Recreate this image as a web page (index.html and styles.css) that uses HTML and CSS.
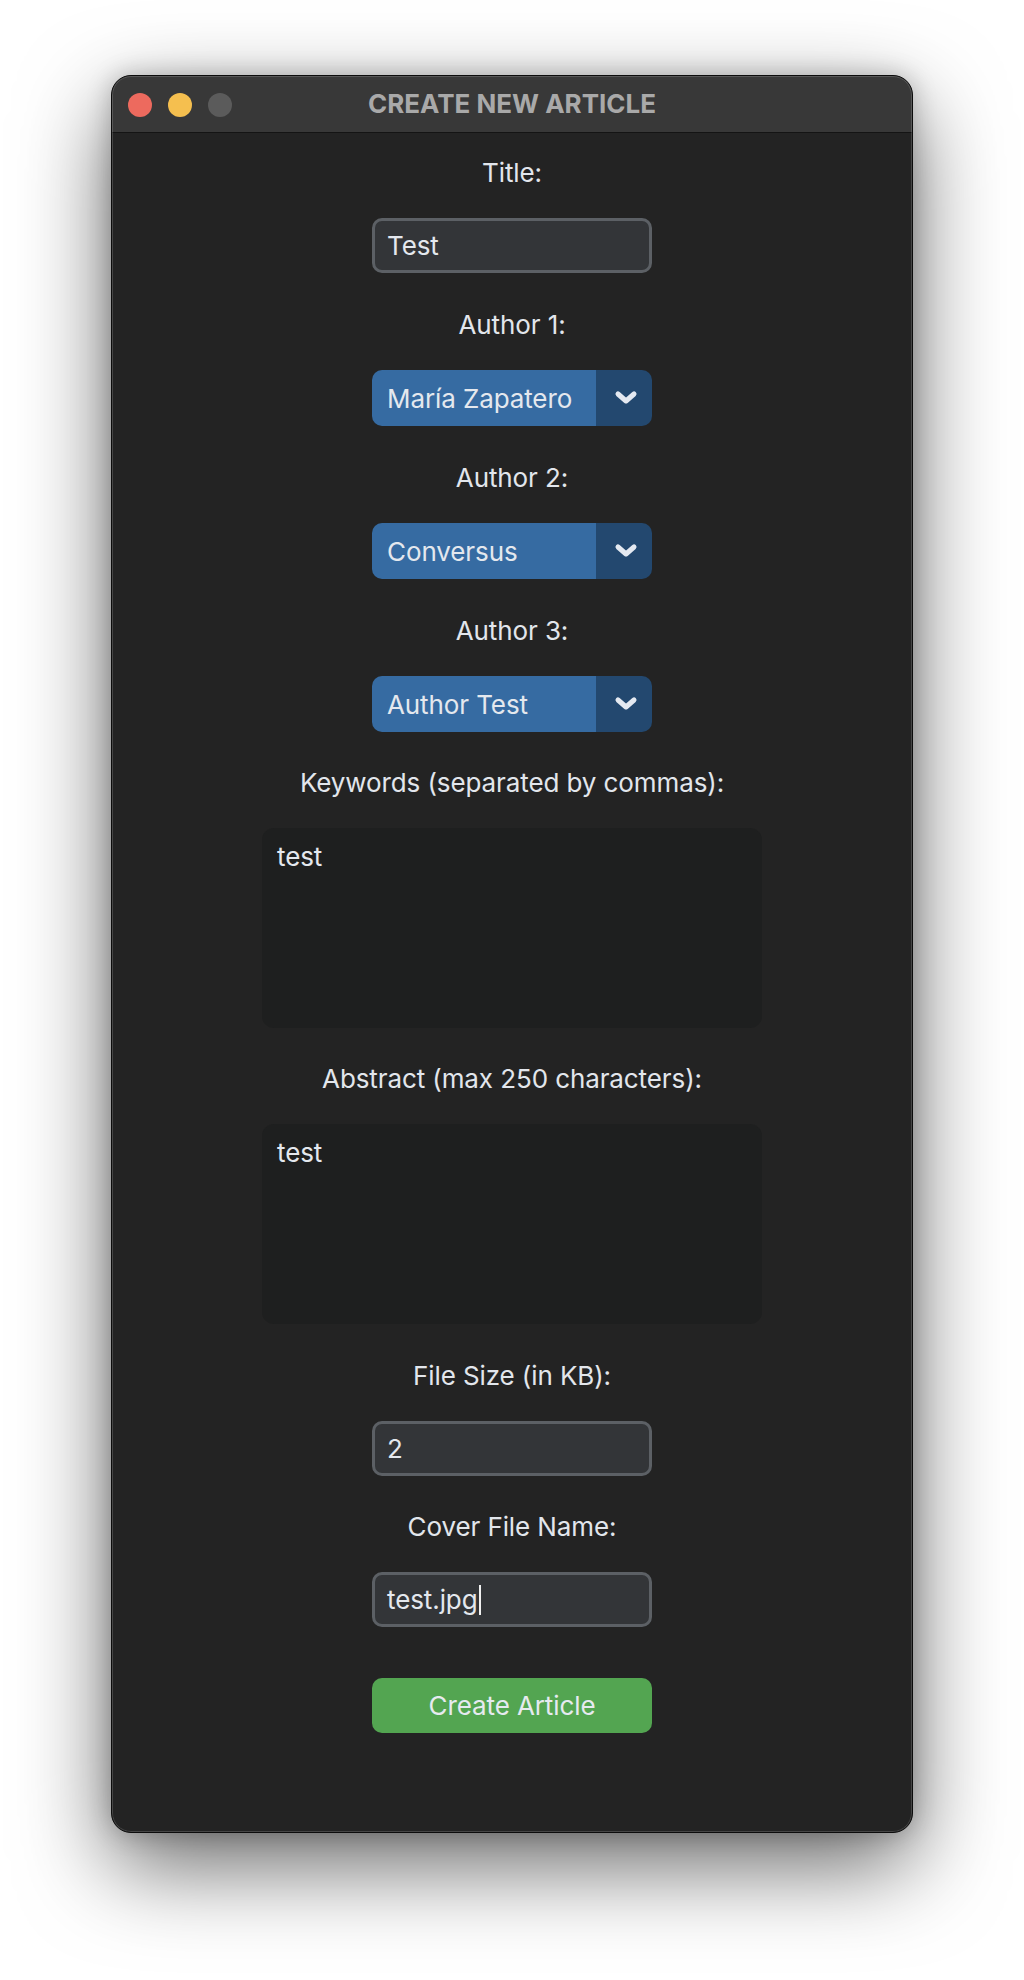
FILE: index.html
```html
<!DOCTYPE html>
<html lang="en">
<head>
<meta charset="utf-8">
<title>Create New Article</title>
<link rel="stylesheet" href="styles.css">
</head>
<body>
<div class="desk">
  <div class="window">
    <div class="titlebar">
      <div class="lights">
        <span class="light red"></span>
        <span class="light yellow"></span>
        <span class="light gray"></span>
      </div>
      <div class="wtitle">CREATE NEW ARTICLE</div>
      <div class="spacer"></div>
    </div>
    <div class="content">
      <div class="field">
        <div class="label">Title:</div>
        <div class="input">Test</div>
      </div>
      <div class="field">
        <div class="label">Author 1:</div>
        <div class="dropdown">
          <div class="dd-value">María Zapatero</div>
          <div class="dd-arrow"><svg width="24" height="16" viewBox="0 0 24 16"><polyline points="4,4 12,11 20,4" fill="none" stroke="#e4e9f1" stroke-width="5" stroke-linecap="round" stroke-linejoin="round"/></svg></div>
        </div>
      </div>
      <div class="field">
        <div class="label">Author 2:</div>
        <div class="dropdown">
          <div class="dd-value">Conversus</div>
          <div class="dd-arrow"><svg width="24" height="16" viewBox="0 0 24 16"><polyline points="4,4 12,11 20,4" fill="none" stroke="#e4e9f1" stroke-width="5" stroke-linecap="round" stroke-linejoin="round"/></svg></div>
        </div>
      </div>
      <div class="field">
        <div class="label">Author 3:</div>
        <div class="dropdown">
          <div class="dd-value">Author Test</div>
          <div class="dd-arrow"><svg width="24" height="16" viewBox="0 0 24 16"><polyline points="4,4 12,11 20,4" fill="none" stroke="#e4e9f1" stroke-width="5" stroke-linecap="round" stroke-linejoin="round"/></svg></div>
        </div>
      </div>
      <div class="field tight">
        <div class="label">Keywords (separated by commas):</div>
        <div class="textarea">test</div>
      </div>
      <div class="field tight">
        <div class="label">Abstract (max 250 characters):</div>
        <div class="textarea">test</div>
      </div>
      <div class="field">
        <div class="label">File Size (in KB):</div>
        <div class="input">2</div>
      </div>
      <div class="field tight">
        <div class="label">Cover File Name:</div>
        <div class="input">test.jpg<span class="caret"></span></div>
      </div>
      <div class="actions">
        <div class="button">Create Article</div>
      </div>
    </div>
  </div>
</div>
</body>
</html>
```

FILE: styles.css
```css
* { box-sizing: border-box; }
html, body { margin: 0; padding: 0; background: #ffffff; }
body { font-family: Inter, "Noto Sans", "Liberation Sans", sans-serif; }

.desk {
  padding-top: 75px;
  height: 1980px;
  overflow: hidden;
}

.window {
  position: relative;
  width: 802px;
  margin: 0 auto;
  border: 1px solid #0c0c0c;
  border-radius: 20px;
  background: #232323;
  overflow: hidden;
  box-shadow: 0 32px 90px rgba(0, 0, 0, 0.6), 0 0 24px rgba(0, 0, 0, 0.22);
}
.window::after {
  content: "";
  position: absolute;
  inset: 0;
  border: 1px solid rgba(255, 255, 255, 0.16);
  border-radius: 19px;
  pointer-events: none;
}

.titlebar {
  height: 56px;
  background: #383838;
  border-bottom: 1px solid #141414;
  display: grid;
  grid-template-columns: 1fr auto 1fr;
  align-items: center;
  box-sizing: content-box;
}
.lights {
  display: flex;
  gap: 16px;
  padding-left: 16px;
  padding-top: 1px;
}
.light {
  width: 24px;
  height: 24px;
  border-radius: 50%;
  display: block;
}
.red { background: #ed6a5e; }
.yellow { background: #f5bf4f; }
.gray { background: #5b5b5b; }
.wtitle {
  font-weight: 700;
  font-size: 26px;
  color: #a9a9a9;
  line-height: 32px;
}

.content {
  padding: 24px 0 99px;
  display: flex;
  flex-direction: column;
  align-items: center;
  color: #e2e6ec;
  font-size: 26px;
  letter-spacing: -0.1px;
}

.field {
  display: flex;
  flex-direction: column;
  align-items: center;
  margin-top: 36px;
}
.field:first-child { margin-top: 0; }
.field.tight { margin-top: 35px; }

.label {
  line-height: 32px;
  margin-bottom: 29px;
  color: #e2e6ec;
}

.input {
  width: 280px;
  height: 55px;
  border: 3px solid #5c6065;
  border-radius: 10px;
  background: #333538;
  padding: 0 12px;
  display: flex;
  align-items: center;
  color: #e4e8ee;
  line-height: 32px;
}
.caret {
  display: inline-block;
  width: 2px;
  height: 30px;
  background: #f0f0f0;
  margin-left: 1px;
}

.dropdown {
  width: 280px;
  height: 56px;
  border-radius: 10px;
  overflow: hidden;
  display: flex;
}
.dd-value {
  flex: 1;
  background: #366ba2;
  padding-left: 15px;
  display: flex;
  align-items: center;
  color: #e4e8ee;
}
.dd-arrow {
  width: 56px;
  background: #23486f;
  display: flex;
  align-items: center;
  justify-content: center;
  padding-left: 4px;
}
.dd-arrow svg { display: block; }

.textarea {
  width: 500px;
  height: 200px;
  border-radius: 12px;
  background: #1e1f1f;
  padding: 13px 15px;
  line-height: 32px;
  color: #e4e8ee;
}

.actions {
  margin-top: 51px;
}
.button {
  width: 280px;
  height: 55px;
  border-radius: 10px;
  background: #53a551;
  color: #e6eaf0;
  display: flex;
  align-items: center;
  justify-content: center;
}
```
